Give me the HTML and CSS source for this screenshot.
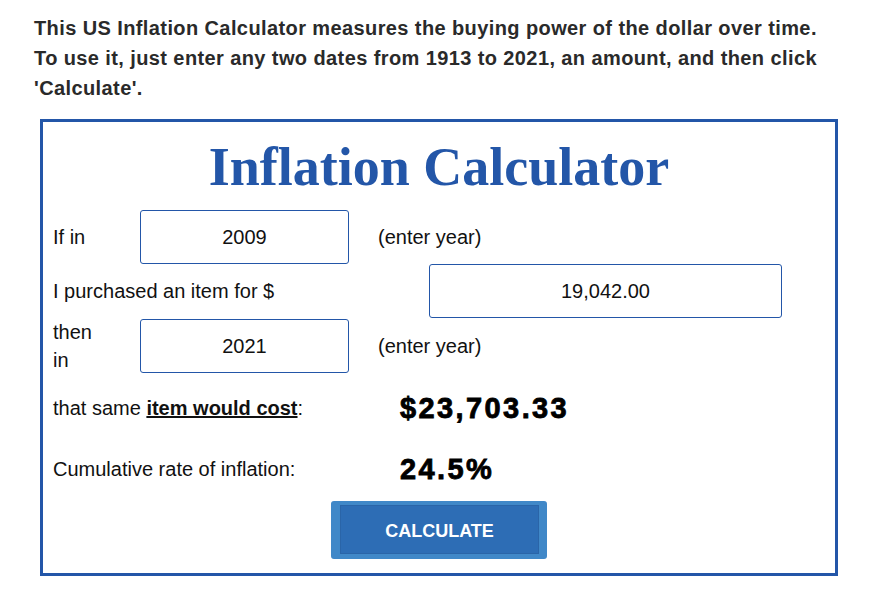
FILE: index.html
```html
<!DOCTYPE html>
<html lang="en">
<head>
    <meta charset="UTF-8">
    <title>US Inflation Calculator</title>
    <link rel="stylesheet" href="styles.css">
</head>
<body>
    <div class="page">
        <p class="intro">This US Inflation Calculator measures the buying power of the dollar over time. To use it, just enter any two dates from 1913 to 2021, an amount, and then click 'Calculate'.</p>

        <div class="calc">
            <h1>Inflation Calculator</h1>

            <div class="row">
                <span class="label">If in</span>
                <input class="field year" type="text" value="2009">
                <span class="hint">(enter year)</span>
            </div>
            <div class="row">
                <span class="label wide">I purchased an item for $</span>
                <input class="field amount" type="text" value="19,042.00">
            </div>
            <div class="row then">
                <span class="label narrow">then in</span>
                <input class="field year" type="text" value="2021">
                <span class="hint">(enter year)</span>
            </div>
            <div class="row result">
                <span class="label wide-sm">that same <a href="#">item would cost</a>:</span>
                <span class="value">$23,703.33</span>
            </div>
            <div class="row result rate">
                <span class="label wide-sm">Cumulative rate of inflation:</span>
                <span class="value">24.5%</span>
            </div>
            <div class="actions">
                <button type="button">CALCULATE</button>
            </div>
        </div>
    </div>
</body>
</html>
```

FILE: styles.css
```css
body {
    margin: 0;
    font-family: "Liberation Sans", Arial, sans-serif;
    background-color: #fff;
    color: #111;
}
.page {
    padding: 13px 0 0 34px;
    width: 800px;
}
.intro {
    margin: 0;
    font-size: 20px;
    font-weight: bold;
    line-height: 30px;
    letter-spacing: 0.4px;
    color: #2a2a2a;
}
.calc {
    margin: 16px 0 0 6px;
    width: 792px;
    height: 451px;
    border: 3px solid #2356a8;
}
.calc h1 {
    margin: 0;
    padding-top: 9px;
    height: 79px;
    font-family: "Liberation Serif", "Times New Roman", serif;
    font-size: 54px;
    line-height: 72px;
    font-weight: bold;
    color: #2356a8;
    text-align: center;
}
.row {
    display: flex;
    align-items: center;
    height: 54px;
    padding-left: 10px;
    font-size: 20px;
}
.row.then {
    height: 56px;
}
.label {
    width: 87px;
    flex-shrink: 0;
}
.label.narrow {
    width: 45px;
    margin-right: 42px;
    line-height: 28px;
}
.label.wide {
    width: 376px;
}
.label.wide-sm {
    width: 347px;
}
.label a {
    color: #111;
    font-weight: bold;
    text-decoration: underline;
}
.field {
    height: 54px;
    box-sizing: border-box;
    border: 1px solid #2356a8;
    border-radius: 3px;
    font-family: "Liberation Sans", Arial, sans-serif;
    font-size: 20px;
    color: #111;
    text-align: center;
    padding: 0;
}
.field.year {
    width: 209px;
}
.field.amount {
    width: 353px;
}
.hint {
    margin-left: 29px;
}
.row.result {
    height: 68px;
}
.row.rate {
    height: 54px;
}
.value {
    font-size: 29px;
    font-weight: bold;
    letter-spacing: 2.4px;
    color: #000;
    -webkit-text-stroke: 0.8px #000;
}
.actions {
    display: flex;
    justify-content: center;
    margin-top: 5px;
}
button {
    width: 216px;
    height: 58px;
    padding: 4px 0 0;
    border: 4px solid #4088c8;
    border-left-width: 9px;
    border-right-width: 8px;
    border-bottom-width: 5px;
    border-radius: 3px;
    background-color: #2d6db5;
    color: #fff;
    font-family: "Liberation Sans", Arial, sans-serif;
    font-size: 18px;
    font-weight: bold;
    box-shadow: inset 0 0 0 1px #2a65a8;
    cursor: pointer;
}
```
